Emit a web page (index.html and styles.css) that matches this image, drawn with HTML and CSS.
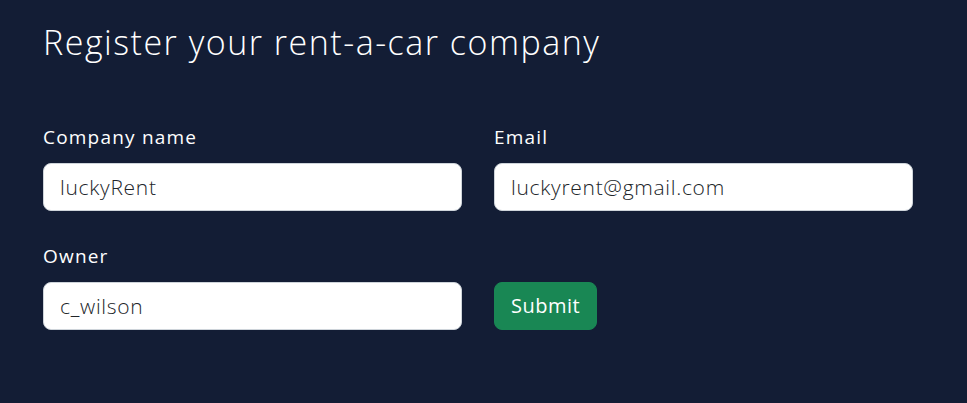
FILE: index.html
```html
<!DOCTYPE html>
<html lang="en">

<head>
    <meta charset="utf-8">
    <title>Register your rent-a-car company</title>
    <meta name="viewport" content="width=device-width, initial-scale=1">
    <link rel="stylesheet" href="styles.css">
</head>

<body>

    <main class="register">
        <h1 class="register-title">Register your rent-a-car company</h1>
        <form class="register-form" action="#">
            <div class="field">
                <label for="company">Company name</label>
                <input type="text" name="company" id="company" value="luckyRent">
            </div>
            <div class="field">
                <label for="email">Email</label>
                <input type="email" name="email" id="email" value="luckyrent@gmail.com">
            </div>
            <div class="field">
                <label for="owner">Owner</label>
                <input type="text" name="owner" id="owner" value="c_wilson">
            </div>
            <div class="field field-submit">
                <button type="submit">Submit</button>
            </div>
        </form>
    </main>

</body>

</html>
```

FILE: styles.css
```css
* {
    margin: 0;
    padding: 0;
    box-sizing: border-box;
}

body {
    font-family: "Open Sans", sans-serif;
    background-color: #131d35;
    color: #fff;
}

.register {
    min-height: 100vh;
    padding: 22px 43px;
}

.register-title {
    font-size: 34px;
    font-weight: 300;
    line-height: 1.2;
    letter-spacing: 1.5px;
    margin-bottom: 61px;
}

/** Two column form grid **/
.register-form {
    display: grid;
    grid-template-columns: 419px 419px;
    column-gap: 32px;
    row-gap: 32px;
}

.field {
    display: flex;
    flex-direction: column;
}

.field label {
    font-size: 19px;
    font-weight: 400;
    line-height: 27px;
    letter-spacing: 1.2px;
    margin-bottom: 12px;
}

.field input {
    font-family: inherit;
    font-size: 21px;
    font-weight: 300;
    line-height: 30px;
    letter-spacing: 0.7px;
    color: #212529;
    background-color: #fff;
    border: 1px solid #ced4da;
    border-radius: 8px;
    padding: 8px 16px;
    width: 100%;
}

.field-submit {
    justify-content: flex-end;
    align-items: flex-start;
}

button {
    font-family: inherit;
    font-size: 20px;
    font-weight: 400;
    line-height: 30px;
    letter-spacing: 0.5px;
    color: #fff;
    background-color: #198754;
    border: 1px solid #198754;
    border-radius: 8px;
    padding: 8px 16px;
}
```
